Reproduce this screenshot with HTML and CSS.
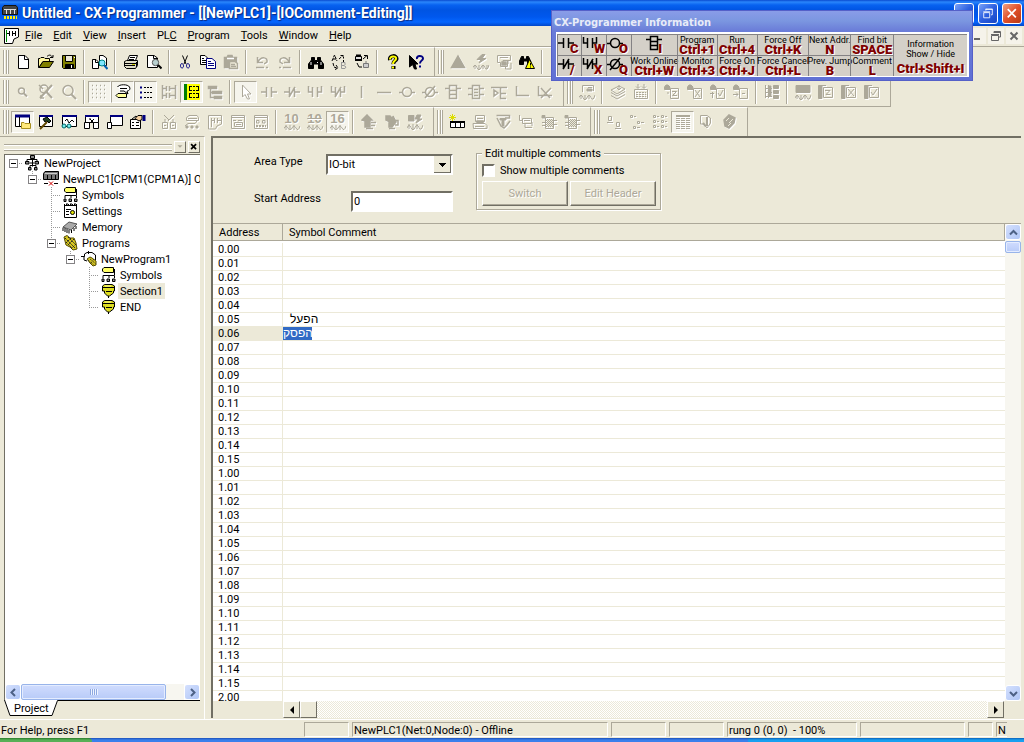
FILE: index.html
```html
<!DOCTYPE html>
<html lang="en">
<head>
<meta charset="utf-8">
<title>Untitled - CX-Programmer</title>
<link rel="stylesheet" href="styles.css">
</head>
<body>
<svg class="defs" aria-hidden="true">
<symbol id="new" viewBox="0 0 16 16"><path fill="#fff" d="M3.500 1.500H10L13.500 5V14.500H3.500Z"/><path d="M9.500 1.500V5.500H13.500"/></symbol>
<symbol id="open" viewBox="0 0 16 16"><path fill="#fff7a0" d="M.5 13.500V4.500H2L3 3.500H6L7 4.500H11.500V7.500H5L1 13.500Z"/><path fill="#808000" d="M1 13.500L5 7.500H15.500L11.500 13.500Z"/><path d="M9 2.500C11 .5 13 .5 14.500 3.500M12 3.500H15V1"/></symbol>
<symbol id="save" viewBox="0 0 16 16"><path fill="#808000" d="M1.500 1.500H14.500V14.500H2.500L1.500 13.500Z"/><path fill="#ece9d8" d="M4.500 1.500H11.500V7.500H4.500Z"/><path fill="#000" d="M4.500 10.500H12.500V14.500H4.500Z"/><path stroke="#fff" d="M10.500 11V14M13 3.500H14"/></symbol>
<symbol id="compare" viewBox="0 0 16 16"><path fill="#fff" d="M.5 5.500H4L6.500 8V14.500H.5ZM7.500 1.500H11L14.500 4V11.500H7.500Z"/><path d="M3.500 5.500V8.500H6.500"/><circle cx="10" cy="9" r="3" fill="#7fe8ff" stroke="#088"/><path stroke="#0060b0" stroke-width="2" d="M12 11L15.500 15"/></symbol>
<symbol id="print" viewBox="0 0 16 16"><path fill="#fff" d="M4.500 6.500L6.500 1.500H14.500L12.500 6.500Z"/><path d="M7 3.500H12M6 5.500H11"/><path fill="#e0ddc8" d="M1.500 7.500L3.500 6.500H14.500V11.500L12.500 14.500H3.500L1.500 12.500Z"/><path d="M2 9.500H13M2 11.500H12M13.500 8V13"/><path stroke="#cc0" d="M9 10.500H12"/></symbol>
<symbol id="preview" viewBox="0 0 16 16"><path fill="#fff" d="M1.500 1.500H8L11.500 4V13.500H1.500Z"/><path d="M7.500 1.500V4.500H11"/><circle cx="9.500" cy="8.500" r="3.200" fill="#b8d0d0" stroke="#555"/><path stroke-width="2" d="M12 11L15.500 14.500"/></symbol>
<symbol id="cut" viewBox="0 0 16 16"><path d="M5.500 1.500L9 10M10.500 1.500L7 10" /><path stroke="#000080" d="M5 9.500C3 9.500 3 14 5 14S7 10 5 9.500M11 9.500C9 9.500 9 14 11 14S13 10 11 9.500"/></symbol>
<symbol id="copy" viewBox="0 0 16 16"><path fill="#fff" d="M.5 1.500H5L7.500 4V10.500H.5Z"/><path d="M2 4.500H4M2 6.500H6M2 8.500H6"/><path stroke="#000080" fill="#fff" d="M6.500 4.500H12L15.500 7.500V14.500H6.500Z"/><path stroke="#000080" d="M8 7.500H11M8 9.500H14M8 11.500H14"/></symbol>
<symbol id="paste" viewBox="0 0 16 16"><path fill="currentColor" d="M1.500 3.500H4L5 1.500H9L10 3.500H13.500V13.500H1.500Z"/><path stroke="#fff" d="M4 4.500H11"/><path fill="#ece9d8" d="M6.500 7.500H12L14.500 9.500V14.500H6.500Z"/><path d="M8 10.500H12M8 12.500H13"/></symbol>
<symbol id="undo" viewBox="0 0 16 16"><path d="M3.500 3V8.500H9M4 8C7 2 14 3 13 8L10 10M2 13.500H10M12 13.500H14"/></symbol>
<symbol id="redo" viewBox="0 0 16 16"><path d="M12.500 3V8.500H7M12 8C9 2 2 3 3 8L6 10M2 13.500H4M6 13.500H14"/></symbol>
<symbol id="find" viewBox="0 0 16 16"><path fill="currentColor" d="M3.500 3.500H6.500V6.500H9.500V3.500H12.500V6L15.500 10V14.500H10.500V10H5.500V14.500H.5V10L3.500 6Z"/><path stroke="#fff" d="M3 8V11M9.500 8V9M13 8V11"/></symbol>
<symbol id="replace" viewBox="0 0 16 16"><path d="M1 7L3.500 1L6 7M2 5H5M2 9L3 13L6 14M5 11L7 14L4 15.500M8 5L12 1.500M9.500 1.500H12.500V4.500M12.500 6V8" stroke-dasharray="3 1"/><path stroke="#999" d="M10.500 8V14.500H14L15 13L13 11.500H11M14 11L14 8.500H11"/></symbol>
<symbol id="replall" viewBox="0 0 16 16"><path fill="#ddd" d="M1.500 2.500H7.500V5.500H1.500Z"/><path stroke-width="2" d="M1 6H8M2 1.500H7"/><path d="M3 9L5 13L8 13M9 5L13 1.500M10 1.500H13.500V5"/><path stroke="#777" fill="#ccc" d="M9.500 9.500H14.500V13.500H9.500ZM12 7V9"/></symbol>
<symbol id="help" viewBox="0 0 16 16"><path stroke-width="4" d="M5 6C4 1 12 1 11.500 5C11 7 8 7 8.500 10M8.500 12V15"/><path stroke="#ff0" stroke-width="2" d="M5 5.500C4.500 1.500 12 1.500 11 5C10.500 7 8 7 8 10M8 12.500V14.500"/></symbol>
<symbol id="whats" viewBox="0 0 16 16"><path fill="#000" d="M1.500 1.500V13L4.500 10.500L6.500 15H8.500L7 10H10Z"/><path stroke="#000080" stroke-width="2" d="M9 5C8 1 15 1 15 4.500C15 7 12 6 12 9.500M12 11.500V13.500"/></symbol>
<symbol id="warn" viewBox="0 0 16 16"><path fill="currentColor" d="M8 2L14.500 13.500H1.500Z"/></symbol>
<symbol id="online" viewBox="0 0 16 16"><path fill="currentColor" stroke-width="1" d="M9 .5L4 5.500H8L6 9L13 4.500H9L12 .5Z"/><path stroke-width="1" d="M0 13.500Q2 9 4 13.500T8 13.500T12 13.500T16 11M2 11V15M6 11V15M10 11V15M14 11V15"/></symbol>
<symbol id="monitor" viewBox="0 0 16 16"><path stroke-width="1" d="M1.500 1.500H14.500V6.500H11.500V12.500H4.500V8.500H1.500ZM4 3.500H12M7 6.500H12V10H7ZM9.500 12V15H15V9"/><path fill="currentColor" d="M6 8H10V11H6Z"/></symbol>
<symbol id="findwarn" viewBox="0 0 16 16"><path fill="#000" d="M2.500 2.500H4.500V5H7.500V2.500H9.500L12 8V10.500H8.500V7H4.500V10.500H.5V7Z"/><path fill="#ff0" d="M10.500 5.500L15.500 14.500H6.500Z"/><path d="M11.500 9V11.500M11.500 12.500V13.500"/></symbol>
<symbol id="zsmall" viewBox="0 0 16 16"><circle cx="6.500" cy="7" r="3"/><path stroke-width="2" d="M9 9.500L12 12.500"/></symbol>
<symbol id="zfit" viewBox="0 0 16 16"><circle cx="6" cy="5" r="4"/><path stroke-width="2" d="M2 14L14 1M8.500 8L14 14"/><path d="M1 1L5 5M3 11V14H6"/></symbol>
<symbol id="zoom" viewBox="0 0 16 16"><circle cx="7" cy="6.500" r="5"/><path stroke-width="2" d="M10.500 10.500L15 15"/></symbol>
<symbol id="dots" viewBox="0 0 16 16"><path stroke-dasharray="1 3" d="M0 1.500H16M0 5.500H16M0 9.500H16M0 13.500H16"/></symbol>
<symbol id="comment" viewBox="0 0 16 16"><path fill="#fff" d="M2.500 3C4 0 13 0 14.500 3C16 6 13 7 12 7L13 10L9 7H5"/><path d="M5 4.500H12"/><path fill="#ff9" d="M3 9.500H11.500V13.500H3L1 11.500Z"/></symbol>
<symbol id="list" viewBox="0 0 16 16"><path stroke-width="2" stroke="#000080" stroke-dasharray="2 3" d="M3 2.500V15"/><path stroke-dasharray="2 1" d="M6 3.500H15M6 8.500H15M6 13.500H15"/></symbol>
<symbol id="ladder" viewBox="0 0 16 16"><path d="M1.500 1V15M14.500 1V15M2 4.500H5M5.500 2V7M8.500 2V7M9 4.500H14M2 11.500H5M5.500 9V14M8.500 9V14M9 11.500H14"/></symbol>
<symbol id="rungs" viewBox="0 0 16 16"><path fill="#ff0" stroke="#ff0" d="M3 .5H15.500V15.500H3Z"/><path stroke="#008000" stroke-width="3" d="M1.500 0V16"/><path stroke-dasharray="2 1" d="M6 2.500H14M6 6.500H14M6 9.500H14M6 13.500H14"/><path d="M5.500 2V7M14.500 2V7M5.500 9V14M14.500 9V14"/></symbol>
<symbol id="blocks" viewBox="0 0 16 16"><path fill="currentColor" d="M1.500 2.500H9.500V4.500H1.500ZM5.500 7.500H14.500V9.500H5.500ZM7.500 12.500H14.500V14.500H7.500Z"/><path d="M3.500 5V13.500H7M3.500 8.500H6"/></symbol>
<symbol id="pointer" viewBox="0 0 16 16"><path stroke-width="1" fill="#fff" d="M4.500 1V13L7 10.500L9.500 15H11.500L9.500 10H13Z"/></symbol>
<symbol id="no" viewBox="0 0 16 16"><path d="M0 8H5M5.500 3V13M10.500 3V13M11 8H16"/></symbol>
<symbol id="nc" viewBox="0 0 16 16"><path d="M0 8H5M5.500 3V13M10.500 3V13M11 8H16M5 13L11 3"/></symbol>
<symbol id="orno" viewBox="0 0 16 16"><path d="M1.500 2V8H5M5.500 3V13M10.500 3V13M11 8H14.500V2"/></symbol>
<symbol id="ornc" viewBox="0 0 16 16"><path d="M1.500 2V8H5M5.500 3V13M10.500 3V13M11 8H14.500V2M5 13L11 3"/></symbol>
<symbol id="vline" viewBox="0 0 16 16"><path d="M8.500 2V14"/></symbol>
<symbol id="hline" viewBox="0 0 16 16"><path d="M1 8.500H15"/></symbol>
<symbol id="coil" viewBox="0 0 16 16"><circle cx="8" cy="8" r="4.500"/><path d="M0 8.500H3M13 8.500H16"/></symbol>
<symbol id="ncoil" viewBox="0 0 16 16"><circle cx="8" cy="8" r="4.500"/><path d="M0 8.500H3M13 8.500H16M3 14L13 2"/></symbol>
<symbol id="func" viewBox="0 0 16 16"><path d="M4.500 1.500H11.500V14.500H4.500ZM0 4.500H4M12 4.500H16M4 6.500H12M4 10.500H12"/></symbol>
<symbol id="func2" viewBox="0 0 16 16"><path d="M4.500 1.500H11.500V14.500H4.500ZM0 4.500H4M12 4.500H16M0 10.500H4M12 10.500H16M6 5.500H10M6 8.500H10M6 11.500H10"/></symbol>
<symbol id="func3" viewBox="0 0 16 16"><path d="M0 3.500H16M9.500 3V14.500H15M10 9.500H15M3 6L7 9L3 12Z"/></symbol>
<symbol id="corner" viewBox="0 0 16 16"><path d="M2.500 2V11.500H15"/></symbol>
<symbol id="del" viewBox="0 0 16 16"><path d="M1.500 2V11.500H15M4 4L13 14M14 4L4 14"/></symbol>
<symbol id="wave" viewBox="0 0 16 16"><path stroke-width="1" d="M3.500 8V1.500H14.500V7M9 3.500H13M0 13.500Q2 9 4 13.500T8 13.500T12 13.500T16 11M2 11V15M6 11V15M10 11V15"/><path fill="currentColor" stroke-width="1" d="M8 5H13V7H8Z"/></symbol>
<symbol id="stack" viewBox="0 0 16 16"><path stroke-width="1" d="M1 6L9 2L15 5L7 10ZM1 8.500L7 12L15 7.500M1 11.500L7 15L15 10.500M9 1V6L7 4M9 6L11 4"/></symbol>
<symbol id="keypad" viewBox="0 0 16 16"><path stroke-width="1" d="M1.500 5.500H14.500V14.500H1.500Z"/><path stroke-width="1" stroke-dasharray="2 1" d="M3 8.500H13M3 10.500H13M3 12.500H13"/><path stroke-width="1" d="M5 0V4M3 2.500L5 4.500L7 2.500M11 0V4M9 2.500L11 4.500L13 2.500"/></symbol>
<symbol id="tz" viewBox="0 0 16 16"><path fill="currentColor" stroke-width="1" d="M.5 5.500V3L2 1H4L6 3V5.500Z"/><path stroke-width="1" d="M6.500 4.500H14.500V14.500H6.500ZM8 7.500H12.500L8.500 11.500H13M4 8V10"/></symbol>
<symbol id="tx" viewBox="0 0 16 16"><path fill="currentColor" stroke-width="1" d="M.5 5.500V3L2 1H4L6 3V5.500Z"/><path stroke-width="1" d="M6.500 4.500H14.500V14.500H6.500ZM8 6L13 13M13 6L8 13"/></symbol>
<symbol id="tv" viewBox="0 0 16 16"><path fill="currentColor" stroke-width="1" d="M.5 5.500V3L2 1H4L6 3V5.500Z"/><path stroke-width="1" d="M6.500 4.500H14.500V14.500H6.500ZM8 9L10 12L13 6M0 9.500H4M2.500 8V14"/></symbol>
<symbol id="ta" viewBox="0 0 16 16"><path fill="currentColor" stroke-width="1" d="M.5 5.500V3L2 1H4L6 3V5.500Z"/><path stroke-width="1" d="M6.500 4.500H14.500V14.500H6.500ZM0 10.500H5M3 8.500L5 10.500L3 12.500M9 9.500H12"/></symbol>
<symbol id="racks" viewBox="0 0 16 16"><path stroke-width="1" d="M1.500 1V14M4.500 1V14M1 4.500H8M1 8.500H8M1 12.500H8"/><path fill="currentColor" stroke-width="1" d="M9.500 1.500H14.500V4.500H9.500ZM9.500 6.500H14.500V9.500H9.500ZM9.500 11.500H14.500V14.500H9.500ZM5 2H7V12H5Z"/></symbol>
<symbol id="block" viewBox="0 0 16 16"><path fill="currentColor" stroke-width="1" d="M1 1.500H15V8.500H1Z"/><path stroke-width="1" d="M0 14Q2 9 4 13.500T8 13.500T12 13.500T16 11M2 11V15M6 11V15M10 11V15"/></symbol>
<symbol id="wz" viewBox="0 0 16 16"><path fill="currentColor" stroke-width="1" d="M.5 1.500H4V14.500H.5Z"/><path stroke-width="1" d="M4 1.500H8M5.500 3.500H14.500V13.500H5.500ZM7 6.500H12L8 10.500H12.500"/></symbol>
<symbol id="wx" viewBox="0 0 16 16"><path fill="currentColor" stroke-width="1" d="M.5 1.500H4V14.500H.5Z"/><path stroke-width="1" d="M4 1.500H8M5.500 3.500H14.500V13.500H5.500ZM7 5L13 12M13 5L7 12"/></symbol>
<symbol id="wv" viewBox="0 0 16 16"><path fill="currentColor" stroke-width="1" d="M.5 1.500H4V14.500H.5Z"/><path stroke-width="1" d="M4 1.500H8M5.500 3.500H14.500V13.500H5.500ZM7 8L9 11L13 5"/></symbol>
<symbol id="proj" viewBox="0 0 16 16"><path fill="#fff" d="M.5 1.500H14.500V12.500H.5Z"/><path stroke="#000080" stroke-width="3" d="M0 2H15"/><path d="M4.500 3V12"/><path fill="#ffe97a" stroke="#a89020" d="M6.500 8.500H9L10 9.500H15.500V14.500H6.500Z"/></symbol>
<symbol id="build" viewBox="0 0 16 16"><path fill="#fff" d="M1.500 1.500H14.500V12.500H1.500Z"/><path stroke="#000080" stroke-width="2" d="M1 2H15"/><path fill="#204020" d="M5 5L9 3L13 7L11 9L9 7L7 8Z"/><path stroke="#604800" stroke-width="2" d="M9 8L2 15"/></symbol>
<symbol id="watch" viewBox="0 0 16 16"><path fill="#fff" d="M1.500 1.500H15.500V12.500H1.500Z"/><path stroke="#000080" stroke-width="2" d="M1 2H16"/><path d="M4 7L6 5L8 9L11 6L13 8"/><circle cx="3" cy="12" r="2" fill="#7ee" stroke="#066"/><circle cx="8" cy="12" r="2" fill="#7ee" stroke="#066"/></symbol>
<symbol id="xref" viewBox="0 0 16 16"><path fill="#fff" d="M1.500 1.500H14.500V8.500H1.500Z"/><path stroke="#000080" stroke-width="2" d="M1 2H15"/><path d="M5 10L10 5M6 5L11 10M5 5H7"/><path fill="#fff" d="M.5 8.500H5.500V14.500H.5ZM9.500 8.500H14.500V14.500H9.500Z"/></symbol>
<symbol id="output" viewBox="0 0 16 16"><path fill="#fff" d="M3.500 1.500H15.500V11.500H3.500Z"/><path stroke="#000080" stroke-width="2" d="M3 2H16"/><path fill="#fff" d="M.5 8.500H4.500V14.500H.5Z"/></symbol>
<symbol id="prop" viewBox="0 0 16 16"><path fill="#fff" d="M.5 5.500H10.500V14.500H.5Z"/><path d="M2 8.500H4M6 8.500H9M2 11.500H4M6 11.500H9M2 5L6 2L10 6"/><path fill="#f4d0a0" d="M5 4.500L8 1.500H12V5.500L9 7Z"/><path stroke="#000080" stroke-width="3" d="M14 1V7"/></symbol>
<symbol id="x1" viewBox="0 0 16 16"><path stroke-width="1" d="M3 1L8 6M13 1L7 7M1.500 8.500H6.500V14.500H1.500ZM9.500 8.500H14.500V14.500H9.500ZM4 5V8M12 5V8M3 11.500H5M11 11.500H13"/></symbol>
<symbol id="x2" viewBox="0 0 16 16"><path stroke-width="1" d="M2.500 3.500L5 1.500H13L14.500 3.500V6.500H2.500ZM4 4.500H13M13 7L11 9.500H4L1 12"/><path fill="currentColor" stroke-width="1" d="M2 12H4V14H2ZM7 12H9V14H7ZM12 12H14V14H12Z"/></symbol>
<symbol id="x3" viewBox="0 0 16 16"><path stroke-width="1" d="M1.500 1.500H14.500V10L10 12L8.500 15H1.500ZM4.500 4V13M4.500 6.500H7M7.500 4V9M10.500 4V9M11 6.500H14"/></symbol>
<symbol id="x4" viewBox="0 0 16 16"><path stroke-width="1" d="M1.500 1.500H14.500V14.500H1.500ZM1 3.500H15M3 6.500H6M8 6.500H12M4.500 8.500H12.500V12.500H4.500ZM6 10.500H11"/></symbol>
<symbol id="x5" viewBox="0 0 16 16"><path stroke-width="1" d="M1.500 1.500H14.500V14.500H1.500ZM1 3.500H15M3.500 6.500H6V9H3.500ZM9.500 6.500H12V9H9.500Z"/><path stroke-width="2" stroke-dasharray="2 1" d="M3 12H13"/></symbol>
<symbol id="up" viewBox="0 0 16 16"><path fill="currentColor" d="M1 6L6 1L11 6H9V13H4V7Z"/><path d="M10 8.500H15M10 11.500H14M5 14.500H12"/></symbol>
<symbol id="down" viewBox="0 0 16 16"><path fill="currentColor" d="M2 2H6L9 5V2L12 8L8 13H5V9H8L2 6Z"/><path d="M11 6.500H14V11H11M5 14.500H11"/></symbol>
<symbol id="flash" viewBox="0 0 16 16"><path fill="currentColor" stroke-width="1" d="M1.500 1.500H7V7H1.500ZM10 1L8 5H11L9 9L15 5H12L14 1Z"/><path stroke-width="1" d="M0 14Q2 9 4 13.500T8 13.500T12 13.500T16 11M2 10V15M6 10V15M10 10V15"/></symbol>
<symbol id="newrung" viewBox="0 0 16 16"><path stroke="#000" fill="#fff" d="M1.500 7.500H15.500V13.500H1.500Z"/><path stroke-width="2" d="M1 8H16"/><path d="M6.500 7V14M11.500 7V14"/><path stroke="#dd0" d="M3.500 0V7M0 3.500H7M1 1L6 6M6 1L1 6"/></symbol>
<symbol id="s1" viewBox="0 0 16 16"><path stroke-width="1" d="M3.500 1.500H12.500V7.500H3.500ZM1 9.500H13L15 11.500V14.500H1.500ZM5 4.500H11M3 12.500H12"/><path fill="currentColor" d="M5 7H11V9H5Z"/></symbol>
<symbol id="s2" viewBox="0 0 16 16"><path d="M1.500 1.500H14.500V4L10 4M2 4L6 12L9 14L12 11L15 7"/><path fill="currentColor" stroke-width="1" d="M5 4.500H11V6H9V12H7V6H5Z"/></symbol>
<symbol id="s3" viewBox="0 0 16 16"><path stroke-width="1" d="M1.500 1V6.500H5M4.500 4.500H13.500V9.500H4.500ZM7 10V13.500H14M14 8V12M6 6.500H12"/></symbol>
<symbol id="s4" viewBox="0 0 16 16"><path fill="currentColor" stroke-width="1" d="M1 1.500H4V4H1Z"/><path stroke-width="1" d="M4.500 3.500H12.500V14.500H4.500ZM1 8.500H4M1 11.500H4M13 6.500H16M13 10.500H16"/><path stroke-width="1" stroke-dasharray="1 1" d="M6 5.500H12M5 6.500H12M6 7.500H12M5 8.500H12M6 9.500H12M5 10.500H12M6 11.500H12M5 12.500H12"/></symbol>
<symbol id="g1" viewBox="0 0 16 16"><path stroke-width="1" d="M2.500 2.500H5.500V6.500H2.500ZM10.500 8.500H13.500V12.500H10.500ZM1 8.500H7M9 14.500H15"/></symbol>
<symbol id="g2" viewBox="0 0 16 16"><path stroke-width="1" d="M1.500 1.500H3.500V3.500H1.500ZM5 2.500H7M8.500 7.500H10.500V9.500H8.500ZM12 8.500H15M4.500 12.500H6.500V14.500H4.500ZM8 13.500H11"/></symbol>
<symbol id="g3" viewBox="0 0 16 16"><path stroke-width="1" d="M1.500 1.500H3.500V3.500H1.500ZM5 2.500H7M9.500 1.500H11.500V3.500H9.500ZM13 2.500H15M1.500 6.500H3.500V8.500H1.500ZM5 7.500H7M9.500 6.500H11.500V8.500H9.500ZM13 7.500H15M1.500 11.500H3.500V13.500H1.500ZM5 12.500H7M9.500 11.500H11.500V13.500H9.500ZM13 12.500H15"/></symbol>
<symbol id="g4" viewBox="0 0 16 16"><path stroke-width="1" stroke-dasharray="4 1" d="M1 4.500H15M1 6.500H15M1 8.500H15M1 10.500H15M1 12.500H15M1 14.500H15"/><path stroke-width="2" d="M1 2H15"/></symbol>
<symbol id="g5" viewBox="0 0 16 16"><path stroke-width="1" d="M5 10H2.500V1.500H9L12.500 4V9L9 14L6 10"/><path stroke-width="2" d="M9 3V12M5 9L8 12.500"/></symbol>
<symbol id="g6" viewBox="0 0 16 16"><path fill="currentColor" d="M3 6L8 1L14 4L13 9L8 14L4 12Z"/><path stroke="#ece9d8" stroke-width="1" d="M5 7L8 4M8 9L12 5M7 12L10 9"/></symbol>
<symbol id="tproj" viewBox="0 0 16 16"><path fill="#888" d="M6.500 .5H10.500V3.500H6.500ZM1.500 6.500H5V9H1.500ZM11 6.500H14.500V9H11ZM4.500 12.500H7V15H4.500ZM10.500 12.500H13V15H10.500Z"/><path d="M8.500 4V11.500M3 6V4.500H13V6M6 12V10.500H12V12M6 8H10"/></symbol>
<symbol id="tplc" viewBox="0 0 16 16"><path fill="#777" d="M.5 2.500L2 .5H15.500V8.500H.5Z"/><path stroke="#ccc" d="M2 2.500H14"/><path d="M4.500 4V8M8.500 4V8M12.500 4V8M1 12.500H5M11 12.500H15"/><path stroke="#c00" d="M6 10.500L10 14.500M10 10.500L6 14.500"/></symbol>
<symbol id="tsym" viewBox="0 0 16 16"><path fill="#ff6" d="M2.500 2L4 .5H13.500V5.500H4L2.500 4Z"/><path d="M14.500 2V8.500H3V11M9 9V11M14.500 9V11"/><path fill="#999" d="M2 12H4V14.500H2ZM7 12H9.500V14.500H7ZM12.500 12H15V14.500H12.500Z"/></symbol>
<symbol id="tset" viewBox="0 0 16 16"><path fill="#fff" d="M2.500 2.500H14.500V14.500H2.500Z"/><path stroke-width="2" stroke-dasharray="1 1" d="M2 2H15"/><path d="M4 6.500H9M4 8.500H7M4 11.500H7M5 0V2M9 0V2M13 0V2"/><circle cx="10.500" cy="9.500" r="2" fill="#dd0"/></symbol>
<symbol id="tmem" viewBox="0 0 16 16"><path fill="#aaa" stroke="#555" d="M1 8L7 3L15 5L9 11Z"/><path d="M1 8.500V12M3 9V13M5 10V14M7 11V14.500M9.500 11V14M12 9V12M14 7V10"/></symbol>
<symbol id="tprg" viewBox="0 0 16 16"><path fill="#d8c820" stroke="#554c00" d="M2 2L5 .5L8 3L12 3L14 8L15 14L11 15L8 12L4 10Z"/><path stroke="#222" stroke-dasharray="2 1" d="M3 3L13 13M6 2L14 10M4 7L10 13M12 4L6 10M9 3L4 8M14 9L9 14"/></symbol>
<symbol id="tnp" viewBox="0 0 16 16"><path fill="#fff" d="M1 5.500H3.500V3L6 1.500H11L14.500 4V9M3 5V9L6 10M0 5.500H3M7.500 0V3"/><path fill="#d8c820" stroke="#554c00" d="M6 8L9 6L11 7L15 10V14L12 15L9 12Z"/><path stroke="#222" stroke-dasharray="1 1" d="M7 9L13 14M9 8L15 13M13 8L9 13"/></symbol>
<symbol id="tsec" viewBox="0 0 16 16"><path fill="#dd2" d="M2.500 3L4.500 1.500H12L14.500 3V8H13.500V10L9.500 13H7.500L4.500 10V8H2.500Z"/><path d="M2 4.500H14M6 8.500H12M8.500 13V15"/><path stroke="#ff9" d="M5 3H11"/></symbol>
</svg>

<header class="title">
<svg class="ico" viewBox="0 0 16 16"><path fill="#444" stroke="#111" d="M.5 2.500L2 .5H14L15.500 2.500V9.500H.5Z"/><path stroke="#ddd" d="M2 4.500H14M4.500 5V9M8.500 5V9M12.500 5V9"/><path stroke="#fe0" stroke-width="3" stroke-dasharray="2 1" d="M2 12.500H15"/></svg>
<h1>Untitled - CX-Programmer - [[NewPLC1]-[IOComment-Editing]]</h1>
<button class="win" aria-label="Minimize"><svg viewBox="0 0 21 21"><path stroke-width="3" d="M5 15H12"/></svg></button>
<button class="win" aria-label="Restore"><svg viewBox="0 0 21 21"><path d="M8 7V5.500H15.500V12H14M7.500 5.500H16M5.500 9.500H12.500V15.500H5.500ZM5 8.500H13"/></svg></button>
<button class="win close" aria-label="Close"><svg viewBox="0 0 21 21"><path stroke-width="2" d="M5.500 5.500L15 15M15 5.500L5.500 15"/></svg></button>
</header>

<nav class="menu">
<svg class="ico" viewBox="0 0 16 16"><path fill="#fff" d="M.5 .5H14.500V9L10 11L8.500 15.500H.5Z"/><path stroke="#080" d="M2.500 2V14"/><path d="M3 5.500H5M5.500 3V8M8.500 3V8M9 5.500H11.500M11.500 3V8"/></svg>
<button><u>F</u>ile</button><button><u>E</u>dit</button><button><u>V</u>iew</button><button><u>I</u>nsert</button><button>PL<u>C</u></button><button><u>P</u>rogram</button><button><u>T</u>ools</button><button><u>W</u>indow</button><button><u>H</u>elp</button>
<span class="mdi">
<button aria-label="Minimize document"><svg viewBox="0 0 14 14"><path stroke-width="2" d="M3 10H9"/></svg></button>
<button aria-label="Restore document"><svg viewBox="0 0 14 14"><path d="M5 4V2.500H11.500V8H10M5 3.500H12M2.500 6.500H9.500V11.500H2.500ZM2 5.500H10"/></svg></button>
<button aria-label="Close document"><svg viewBox="0 0 14 14"><path stroke-width="2" d="M3.500 3.500L10.500 10.500M10.500 3.500L3.500 10.500"/></svg></button>
</span>
</nav>

<div class="bands">
<div class="band">
<div class="bar" role="toolbar" aria-label="Standard">
<button aria-label="New"><svg><use href="#new"/></svg></button><button aria-label="Open"><svg><use href="#open"/></svg></button><button aria-label="Save"><svg><use href="#save"/></svg></button><i></i>
<button aria-label="Compare"><svg><use href="#compare"/></svg></button><i></i>
<button aria-label="Print"><svg><use href="#print"/></svg></button><button aria-label="Print preview"><svg><use href="#preview"/></svg></button><i></i>
<button aria-label="Cut"><svg><use href="#cut"/></svg></button><button aria-label="Copy"><svg><use href="#copy"/></svg></button><button disabled aria-label="Paste"><svg><use href="#paste"/></svg></button><i></i>
<button disabled aria-label="Undo"><svg><use href="#undo"/></svg></button><button disabled aria-label="Redo"><svg><use href="#redo"/></svg></button><i></i>
<button aria-label="Find"><svg><use href="#find"/></svg></button><button aria-label="Replace"><svg><use href="#replace"/></svg></button><button aria-label="Change all"><svg><use href="#replall"/></svg></button><i></i>
<button aria-label="Help"><svg><use href="#help"/></svg></button><button aria-label="Context help"><svg><use href="#whats"/></svg></button>
</div>
<div class="bar" role="toolbar" aria-label="PLC">
<button disabled aria-label="Work online"><svg><use href="#warn"/></svg></button><button disabled aria-label="Auto online"><svg><use href="#online"/></svg></button><button disabled aria-label="Monitor"><svg><use href="#monitor"/></svg></button><button aria-label="Find warning"><svg><use href="#findwarn"/></svg></button><i></i>
<button disabled aria-label="Transfer"><svg><use href="#stack"/></svg></button>
</div>
</div>
<div class="band">
<div class="bar" role="toolbar" aria-label="Diagram">
<button disabled aria-label="Zoom out"><svg><use href="#zsmall"/></svg></button><button disabled aria-label="Zoom to fit"><svg><use href="#zfit"/></svg></button><button disabled aria-label="Zoom in"><svg><use href="#zoom"/></svg></button><i></i>
<button disabled class="on" aria-label="Grid"><svg><use href="#dots"/></svg></button><button class="on" aria-label="Comments"><svg><use href="#comment"/></svg></button><button class="on" aria-label="Annotations"><svg><use href="#list"/></svg></button><button disabled aria-label="Rung monitor"><svg><use href="#ladder"/></svg></button><button class="on" aria-label="Program view"><svg><use href="#rungs"/></svg></button><button disabled aria-label="Block view"><svg><use href="#blocks"/></svg></button><i></i>
<button disabled class="on" aria-label="Select"><svg><use href="#pointer"/></svg></button><button disabled aria-label="Contact"><svg><use href="#no"/></svg></button><button disabled aria-label="Closed contact"><svg><use href="#nc"/></svg></button><button disabled aria-label="OR contact"><svg><use href="#orno"/></svg></button><button disabled aria-label="Closed OR contact"><svg><use href="#ornc"/></svg></button><button disabled aria-label="Vertical"><svg><use href="#vline"/></svg></button><button disabled aria-label="Horizontal"><svg><use href="#hline"/></svg></button><button disabled aria-label="Coil"><svg><use href="#coil"/></svg></button><button disabled aria-label="Closed coil"><svg><use href="#ncoil"/></svg></button><button disabled aria-label="Instruction"><svg><use href="#func"/></svg></button><button disabled aria-label="Function block"><svg><use href="#func2"/></svg></button><button disabled aria-label="Parameter"><svg><use href="#func3"/></svg></button><button disabled aria-label="Connect"><svg><use href="#corner"/></svg></button><button disabled aria-label="Delete line"><svg><use href="#del"/></svg></button>
</div>
<div class="bar" role="toolbar" aria-label="Online edit">
<button disabled aria-label="Watch"><svg><use href="#wave"/></svg></button><i></i>
<button disabled aria-label="Layers"><svg><use href="#stack"/></svg></button><button disabled aria-label="Keypad"><svg><use href="#keypad"/></svg></button><i></i>
<button disabled aria-label="Edit rungs"><svg><use href="#tz"/></svg></button><button disabled aria-label="Cancel edit"><svg><use href="#tx"/></svg></button><button disabled aria-label="Send changes"><svg><use href="#tv"/></svg></button><button disabled aria-label="Go to edit"><svg><use href="#ta"/></svg></button><i></i>
<button disabled aria-label="Racks"><svg><use href="#racks"/></svg></button><i></i>
<button disabled aria-label="Block monitor"><svg><use href="#block"/></svg></button><button disabled aria-label="Block edit"><svg><use href="#wz"/></svg></button><button disabled aria-label="Block cancel"><svg><use href="#wx"/></svg></button><button disabled aria-label="Block send"><svg><use href="#wv"/></svg></button>
</div>
</div>
<div class="band">
<div class="bar" role="toolbar" aria-label="Views">
<button class="on" aria-label="Workspace"><svg><use href="#proj"/></svg></button><button aria-label="Output"><svg><use href="#build"/></svg></button><button aria-label="Watch window"><svg><use href="#watch"/></svg></button><button aria-label="Cross reference"><svg><use href="#xref"/></svg></button><button aria-label="Address reference"><svg><use href="#output"/></svg></button><button aria-label="Properties"><svg><use href="#prop"/></svg></button><i></i>
<button disabled aria-label="References"><svg><use href="#x1"/></svg></button><button disabled aria-label="Symbols"><svg><use href="#x2"/></svg></button><button disabled aria-label="Diagram"><svg><use href="#x3"/></svg></button><button disabled aria-label="Mnemonics"><svg><use href="#x4"/></svg></button><button disabled aria-label="Comments table"><svg><use href="#x5"/></svg></button><i></i>
<button disabled class="num" aria-label="Decimal">10<svg viewBox="0 0 16 6"><path d="M0 4.500Q2 0 4 4T8 4T12 4T16 2M2 1V6M6 1V6M10 1V6"/></svg></button><button disabled class="num" aria-label="Signed decimal"><s>10</s><svg viewBox="0 0 16 6"><path d="M0 4.500Q2 0 4 4T8 4T12 4T16 2M2 1V6M6 1V6M10 1V6"/></svg></button><button disabled class="num on" aria-label="Hex">16<svg viewBox="0 0 16 6"><path d="M0 4.500Q2 0 4 4T8 4T12 4T16 2M2 1V6M6 1V6M10 1V6"/></svg></button><i></i>
<button disabled aria-label="Force on"><svg><use href="#up"/></svg></button><button disabled aria-label="Force off"><svg><use href="#down"/></svg></button><button disabled aria-label="Force cancel"><svg><use href="#flash"/></svg></button>
</div>
<div class="bar" role="toolbar" aria-label="Insert">
<button aria-label="New PLC"><svg><use href="#newrung"/></svg></button><button disabled aria-label="New program"><svg><use href="#s1"/></svg></button><button disabled aria-label="New section"><svg><use href="#s2"/></svg></button><button disabled aria-label="New symbol"><svg><use href="#s3"/></svg></button><button disabled aria-label="New block"><svg><use href="#s4"/></svg></button><button disabled aria-label="New block instance"><svg><use href="#s4"/></svg></button>
</div>
<div class="bar" role="toolbar" aria-label="Symbol table">
<button disabled aria-label="Large icons"><svg><use href="#g1"/></svg></button><button disabled aria-label="Small icons"><svg><use href="#g2"/></svg></button><button disabled aria-label="List"><svg><use href="#g3"/></svg></button><button disabled class="on" aria-label="Details"><svg><use href="#g4"/></svg></button><button disabled aria-label="Validate"><svg><use href="#g5"/></svg></button><button disabled aria-label="Compile"><svg><use href="#g6"/></svg></button>
</div>
</div>
</div>

<main>
<aside>
<div class="dock"><span class="rails"></span><button disabled aria-label="Expand panel"><svg viewBox="0 0 12 12"><path fill="#aca899" stroke="none" d="M3 4H9L6 7Z"/></svg></button><button aria-label="Close panel"><svg viewBox="0 0 12 12"><path stroke-width="2" d="M2.500 2.500L8.500 8.500M8.500 2.500L2.500 8.500"/></svg></button></div>
<div class="treebox">
<ul class="tree">
<li><div class="node root"><span class="join"><button aria-label="Collapse NewProject"></button></span><svg><use href="#tproj"/></svg><span>NewProject</span></div>
<ul><li><div class="node last"><span class="join"><button aria-label="Collapse NewPLC1"></button></span><svg><use href="#tplc"/></svg><span>NewPLC1[CPM1(CPM1A)] Offline</span></div>
<ul>
<li><div class="node"><span class="join"></span><svg><use href="#tsym"/></svg><span>Symbols</span></div></li>
<li><div class="node"><span class="join"></span><svg><use href="#tset"/></svg><span>Settings</span></div></li>
<li><div class="node"><span class="join"></span><svg><use href="#tmem"/></svg><span>Memory</span></div></li>
<li><div class="node last"><span class="join"><button aria-label="Collapse Programs"></button></span><svg><use href="#tprg"/></svg><span>Programs</span></div>
<ul><li><div class="node last"><span class="join"><button aria-label="Collapse NewProgram1"></button></span><svg><use href="#tnp"/></svg><span>NewProgram1</span></div>
<ul>
<li><div class="node"><span class="join"></span><svg><use href="#tsym"/></svg><span>Symbols</span></div></li>
<li><div class="node"><span class="join"></span><svg><use href="#tsec"/></svg><span class="sel">Section1</span></div></li>
<li><div class="node last"><span class="join"></span><svg><use href="#tsec"/></svg><span>END</span></div></li>
</ul></li></ul></li>
</ul></li></ul></li>
</ul>
<div class="hscroll"><button class="xp" aria-label="Scroll left"><svg viewBox="0 0 13 13"><path d="M8 3L4.500 6.500L8 10"/></svg></button><span class="thumb"></span><span class="rest"></span><button class="xp" aria-label="Scroll right"><svg viewBox="0 0 13 13"><path d="M5 3L8.500 6.500L5 10"/></svg></button></div>
</div>
<div class="tabs"><svg viewBox="0 0 8 17"><path fill="#fff" stroke="none" d="M0 0H8V16H6Z"/><path d="M.5 0L6 15.500H8"/></svg><button>Project</button><svg viewBox="0 0 8 17"><path fill="#fff" stroke="none" d="M0 0H8L2 16H0Z"/><path d="M0 15.500H2L7.500 .5H8"/></svg><span></span></div>
</aside>

<section class="editor">
<form class="form">
<div class="fields">
<label for="area">Area Type</label><select id="area"><option>IO-bit</option></select>
<label for="start">Start Address</label><input id="start" type="text" value="0">
</div>
<fieldset><legend>Edit multiple comments</legend>
<label class="check"><input type="checkbox">Show multiple comments</label>
<div class="pair"><button type="button" disabled>Switch</button><button type="button" disabled>Edit Header</button></div>
</fieldset>
</form>
<div class="view">
<div class="sheet">
<table>
<thead><tr><th>Address</th><th>Symbol Comment</th></tr></thead>
<tbody>
<tr><td>0.00</td><td></td></tr><tr><td>0.01</td><td></td></tr><tr><td>0.02</td><td></td></tr><tr><td>0.03</td><td></td></tr><tr><td>0.04</td><td></td></tr>
<tr><td>0.05</td><td lang="he">הפעל</td></tr>
<tr class="edit"><td>0.06</td><td><input type="text" lang="he" aria-label="Comment for 0.06" value="הפסק"></td></tr>
<tr><td>0.07</td><td></td></tr><tr><td>0.08</td><td></td></tr><tr><td>0.09</td><td></td></tr><tr><td>0.10</td><td></td></tr><tr><td>0.11</td><td></td></tr><tr><td>0.12</td><td></td></tr><tr><td>0.13</td><td></td></tr><tr><td>0.14</td><td></td></tr><tr><td>0.15</td><td></td></tr>
<tr><td>1.00</td><td></td></tr><tr><td>1.01</td><td></td></tr><tr><td>1.02</td><td></td></tr><tr><td>1.03</td><td></td></tr><tr><td>1.04</td><td></td></tr><tr><td>1.05</td><td></td></tr><tr><td>1.06</td><td></td></tr><tr><td>1.07</td><td></td></tr><tr><td>1.08</td><td></td></tr><tr><td>1.09</td><td></td></tr><tr><td>1.10</td><td></td></tr><tr><td>1.11</td><td></td></tr><tr><td>1.12</td><td></td></tr><tr><td>1.13</td><td></td></tr><tr><td>1.14</td><td></td></tr><tr><td>1.15</td><td></td></tr>
<tr><td>2.00</td><td></td></tr>
</tbody>
</table>
</div>
<div class="vscroll"><button class="xp" aria-label="Scroll up"><svg viewBox="0 0 13 13"><path d="M3 8.500L6.500 5L10 8.500"/></svg></button><span class="vthumb"></span><span class="rest"></span><button class="xp" aria-label="Scroll down"><svg viewBox="0 0 13 13"><path d="M3 5L6.500 8.500L10 5"/></svg></button></div>
</div>
<div class="bottom"><button aria-label="Scroll table left"><svg viewBox="0 0 12 12"><path fill="#000" stroke="none" d="M8 2V10L4 6Z"/></svg></button><span class="knob"></span><span class="track"></span><button aria-label="Scroll table right"><svg viewBox="0 0 12 12"><path fill="#000" stroke="none" d="M4 2V10L8 6Z"/></svg></button></div>
</section>
</main>

<footer class="status"><span class="msg">For Help, press F1</span><span class="w45"></span><span class="w256">NewPLC1(Net:0,Node:0) - Offline</span><span class="w55"></span><span class="w55"></span><span class="w130">rung 0 (0, 0) &nbsp;- 100%</span><span class="w105"></span><span class="w25"></span><span class="lock">N</span></footer>
<div class="taskbar"><span class="start"></span><span class="tasks"></span><span class="tray"></span></div>

<section class="info" aria-label="CX-Programmer Information">
<h2>CX-Programmer Information</h2>
<div class="keys">
<div class="sym"><svg><use href="#no"/></svg><b>C</b></div><div class="sym"><svg><use href="#orno"/></svg><b>W</b></div><div class="sym"><svg><use href="#coil"/></svg><b>O</b></div><div class="sym mid"><svg><use href="#func"/></svg><b>I</b></div>
<div>Program<b>Ctrl+1</b></div><div>Run<b>Ctrl+4</b></div><div>Force Off<b>Ctrl+K</b></div><div>Next Addr.<b>N</b></div><div>Find bit<b>SPACE</b></div>
<div class="tall">Information<br>Show / Hide<b>Ctrl+Shift+I</b></div>
<div class="sym"><svg><use href="#nc"/></svg><b>/</b></div><div class="sym"><svg><use href="#ornc"/></svg><b>X</b></div><div class="sym"><svg><use href="#ncoil"/></svg><b>Q</b></div><div>Work Online<b>Ctrl+W</b></div>
<div>Monitor<b>Ctrl+3</b></div><div>Force On<b>Ctrl+J</b></div><div>Force Cancel<b>Ctrl+L</b></div><div>Prev. Jump<b>B</b></div><div>Comment<b>L</b></div>
</div>
</section>
</body>
</html>
```

FILE: styles.css
```css
*, *::before { box-sizing: border-box; }
body { margin: 0; height: 100vh; display: flex; flex-direction: column; overflow: hidden; background: #ece9d8; color: #000; font: 11px/14px Roboto, "Liberation Sans", Arial, sans-serif; }
button, input, select { font: inherit; color: inherit; margin: 0; padding: 0; border: 0; background: none; border-radius: 0; }
svg { fill: none; stroke: currentColor; display: block; flex: none; }
.defs { position: absolute; width: 0; height: 0; }
ul { list-style: none; margin: 0; padding: 0; }
.ico { width: 16px; height: 16px; }

.title { display: flex; align-items: center; gap: 4px; height: 26px; flex: none; padding: 0 2px; background: linear-gradient(#0a4bd0, #2a86fb 2px, #0862f0 5px, #0054e3 10px, #0058ee 17px, #0566ff 22px, #0347c8); }
.title h1 { flex: 1; margin: 0; color: #fff; font: bold 14px/20px Roboto, "Open Sans", sans-serif; text-shadow: 1px 1px 1px #0a2a80; white-space: nowrap; }
.win { width: 20px; height: 21px; border: 1px solid #fff; border-radius: 3px; color: #fff; background: linear-gradient(135deg, #7aa2f8, #2c5fe0 50%, #1846c4); }
.win svg { width: 18px; height: 19px; }
.close { background: linear-gradient(135deg, #f0a080, #e0502a 50%, #b83a14); }

.menu { display: flex; align-items: center; height: 20px; flex: none; padding: 0 2px 0 4px; }
.menu > button { padding: 0 6px 0 5px; height: 18px; }
.mdi { margin-left: auto; display: flex; gap: 2px; }
.mdi button { width: 16px; height: 16px; padding: 1px; color: #666; background: #f5f3ea; }
.mdi svg { width: 14px; height: 14px; }

.bands { flex: none; border-top: 1px solid #aca899; }
.band { display: flex; height: 30px; }
.band:last-child { height: 29px; }
.bar { display: flex; align-items: center; padding-right: 7px; border-right: 1px solid #aca899; border-bottom: 1px solid #aca899; border-top: 1px solid #fff; }
.band:last-child .bar { border-bottom: 0; }
.bar::before { content: ""; width: 6px; height: 24px; margin: 0 2px 0 3px; border: solid #aca899; border-width: 0 1px; background: linear-gradient(90deg, #fff 1px, #ece9d8 1px 2px, #aca899 2px 3px, #fff 3px); }
.bar button { display: flex; align-items: center; justify-content: center; width: 23px; height: 22px; }
.bar svg { width: 16px; height: 16px; }
.bar i { width: 2px; height: 24px; margin: 0 3px; background: linear-gradient(90deg, #aca899 1px, #fff 1px); }
.bar button:disabled svg { color: #aca899; stroke-width: 1.5; filter: drop-shadow(1px 1px 0 #fff); }
.bar .on { border: 1px solid; border-color: #aca899 #fff #fff #aca899; background: #f5f4ec; }
.bar .num { flex-direction: column; color: #aca899; font: bold 13px/10px "Liberation Sans", sans-serif; text-shadow: 1px 1px 0 #fff; }
.bar .num:disabled svg { height: 6px; stroke-width: 1; }

main { flex: 1; min-height: 0; display: flex; }
aside { width: 205px; flex: none; display: flex; flex-direction: column; padding: 3px 4px 2px 4px; border-top: 1px solid #aca899; border-right: 1px solid #fff; }
.dock { display: flex; align-items: center; gap: 2px; height: 14px; flex: none; }
.rails { flex: 1; height: 7px; border: solid #aca899; border-width: 1px 0; background: linear-gradient(#fff 1px, #ece9d8 1px 4px, #fff 4px); }
.dock button { width: 12px; height: 12px; border: 1px solid; border-color: #fff #716f64 #716f64 #fff; }
.dock svg { width: 10px; height: 10px; }
.treebox { flex: 1; min-height: 0; display: flex; flex-direction: column; background: #fff; border: 1px solid #716f64; border-width: 1px 0 0 1px; overflow: hidden; }
.tree { flex: 1; min-height: 0; overflow: hidden; padding-left: 4px; }
.tree ul { padding-left: 19px; }
.node { display: flex; align-items: center; height: 16px; white-space: nowrap; }
.node > svg { width: 16px; height: 16px; margin-right: 2px; }
.node > span:last-child { padding: 2px 2px 0; line-height: 14px; }
.node .sel { background: #ece9d8; }
.join { display: flex; align-items: center; width: 15px; height: 16px; flex: none; background: repeating-linear-gradient(#999 0 1px, transparent 1px 2px) 4px 0 / 1px 16px no-repeat, repeating-linear-gradient(90deg, #999 0 1px, transparent 1px 2px) 4px 8px / 10px 1px no-repeat; }
.last .join { background-size: 1px 9px, 10px 1px; }
.root .join { background-size: 0 0, 10px 1px; }
.join button { width: 9px; height: 9px; border: 1px solid #848284; background: linear-gradient(#000, #000) center / 5px 1px no-repeat #fff; }
.hscroll { display: flex; height: 16px; flex: none; }
.xp { display: flex; align-items: center; justify-content: center; width: 16px; height: 16px; flex: none; border: 1px solid #fff; border-radius: 3px; background: linear-gradient(135deg, #d4e0fe, #b0c6f6); color: #4d6185; }
.xp svg { width: 13px; height: 13px; stroke-width: 2; }
.thumb, .vthumb { border: 1px solid #98b4ea; border-radius: 2px; background: linear-gradient(#d0dcfe, #b8cbf8); box-shadow: inset 0 0 0 1px #e4ecff; }
.thumb { flex: 8; background: repeating-linear-gradient(90deg, #8ea8e0 0 1px, #eef4ff 1px 2px) center / 8px 6px no-repeat, linear-gradient(#d0dcfe, #b8cbf8); }
.hscroll .rest { flex: 1; background: #f7f6f0; }
.tabs { display: flex; height: 17px; flex: none; }
.tabs svg { width: 8px; height: 17px; }
.tabs button { height: 16px; padding: 2px 1px 0 2px; background: #fff; border-bottom: 1px solid #000; }
.tabs span { flex: 1; border-top: 1px solid #000; }

.editor { flex: 1; min-width: 0; display: flex; flex-direction: column; margin: 0 3px 1px 6px; border: 1px solid #716f64; border-width: 2px 0 0 2px; }
.form { display: flex; align-items: flex-start; gap: 23px; height: 86px; flex: none; padding: 7px 0 0 41px; border-bottom: 1px solid #aca899; }
.fields { display: grid; grid-template-columns: 72px 127px; grid-template-rows: 38px 36px; align-items: center; }
.fields label { padding-bottom: 4px; white-space: nowrap; }
.fields input, .fields select { border: 2px solid; border-color: #716f64 #fff #fff #716f64; background: #fff; height: 21px; padding: 1px 1px 0; min-width: 0; }
.fields input { width: 102px; justify-self: end; }
.fields select { appearance: none; background: linear-gradient(#000, #000) right 5px top 7px / 7px 1px no-repeat, linear-gradient(#000, #000) right 6px top 8px / 5px 1px no-repeat, linear-gradient(#000, #000) right 7px top 9px / 3px 1px no-repeat, linear-gradient(#000, #000) right 8px top 10px / 1px 1px no-repeat, linear-gradient(#716f64, #716f64) right / 1px 17px no-repeat, linear-gradient(#716f64, #716f64) right bottom / 17px 1px no-repeat, linear-gradient(#ece9d8, #ece9d8) right / 17px 17px no-repeat #fff; }
fieldset { margin: 1px 0 0; padding: 0 4px 3px 5px; border: 1px solid #aca899; box-shadow: inset 1px 1px 0 #fff, 1px 1px 0 #fff; min-width: 0; }
legend { padding: 1px 3px 0; background: #ece9d8; }
.check { display: flex; align-items: center; gap: 5px; height: 19px; }
.check input { appearance: none; width: 13px; height: 13px; border: 2px solid; border-color: #716f64 #fff #fff #716f64; background: #fff; }
.pair { display: flex; gap: 2px; margin-top: 1px; }
.pair button { width: 86px; height: 25px; border: 1px solid; border-color: #fff #716f64 #716f64 #fff; box-shadow: inset -1px -1px 0 #aca899; color: #aca899; text-shadow: 1px 1px 0 #fff; }
.view { flex: 1; min-height: 0; display: flex; }
.sheet { flex: 1; min-width: 0; overflow: hidden; background: #fff; }
table { width: 100%; border-collapse: separate; border-spacing: 0; table-layout: fixed; }
th { height: 17px; padding: 2px 6px 0; text-align: left; font-weight: normal; background: #ece9d8; border-bottom: 1px solid #aca899; border-right: 1px solid #aca899; }
th:first-child { width: 70px; }
tbody::before { content: ""; display: block; height: 2px; }
td { height: 14px; padding: 0 5px; line-height: 13px; border-bottom: 1px solid #ece9d8; }
td:first-child { border-right: 1px solid #ece9d8; }
.edit td:first-child { background: #ece9d8; }
td + td { padding-left: 7px; }
.edit td + td { padding: 0; }
td[lang], td input { font: 12px/13px "Liberation Sans", Arial, sans-serif; }
td input { display: block; width: 29px; height: 13px; background: #316ac5; color: #fff; }
.vscroll { display: flex; flex-direction: column; width: 16px; flex: none; background: #f7f6f0; }
.vthumb { height: 12px; margin-top: 1px; }
.vscroll .rest { flex: 1; }
.bottom { display: flex; height: 17px; flex: none; padding: 0 17px 0 70px; }
.bottom button, .knob { width: 17px; border: 1px solid; border-color: #fff #716f64 #716f64 #fff; background: #ece9d8; }
.bottom button { display: flex; align-items: center; justify-content: center; }
.bottom svg { width: 12px; height: 12px; }
.track { flex: 1; background: repeating-conic-gradient(#fff 0 25%, #ece9d8 0 50%) 0 0 / 2px 2px; }

.status { display: flex; gap: 3px; height: 19px; flex: none; padding: 2px 17px 1px 1px; border-top: 1px solid #fff; line-height: 15px; white-space: nowrap; }
.status span { padding-left: 1px; border: 1px solid; border-color: #aca899 #fff #fff #aca899; }
.status .msg { flex: 1; border: 0; padding: 0; line-height: 17px; }
.w45 { width: 45px; }
.w256 { width: 256px; }
.w55 { width: 55px; }
.w130 { width: 130px; }
.w105 { width: 105px; }
.w25 { width: 25px; }
.status .lock { width: 11px; border-right: 0; }
.taskbar { display: flex; height: 4px; flex: none; background: linear-gradient(#1c50b8, #3a80ec 2px); }
.start { width: 9%; background: linear-gradient(#2a7a2a, #57b057 2px); border-radius: 0 4px 0 0; }
.tasks { flex: 1; }
.tray { width: 27%; background: linear-gradient(#0c60b8, #18a0f0 2px); }

.info { position: absolute; top: 10px; right: 51px; width: 422px; padding: 1px 3px 3px 4px; border: 1px solid #5560c8; background: linear-gradient(#8a9ce8, #7b96e0 10px, #6a7cd8 20px, #6070d4); }
.info h2 { margin: 0 0 0 -2px; height: 20px; color: #e8ecf8; font: bold 11px/21px "DejaVu Sans Condensed", "DejaVu Sans", sans-serif; white-space: nowrap; }
.keys { display: grid; grid-template-columns: 24fr 25fr 25fr 46fr 40fr 40fr 52fr 42fr 43fr 74fr; grid-template-rows: 21px 21px; border: 2px solid #fff; border-width: 2px 2px 1px 1px; background: #d4d0c8; font-size: 9px; line-height: 10px; }
.keys > div { display: flex; flex-direction: column; align-items: center; min-width: 0; white-space: nowrap; border: solid #848284; border-width: 1px 0 0 1px; }
.keys b { color: #800000; font-weight: 900; font-size: 13px; line-height: 10px; text-shadow: 1px 1px 0 #fff; }
.keys .tall { grid-row: span 2; text-align: center; padding-top: 4px; }
.keys .tall b { margin-top: 5px; }
.keys .sym { flex-direction: row; align-items: flex-start; }
.sym svg { width: 16px; height: 16px; stroke-width: 1.5; }
.sym b { align-self: flex-end; margin-left: -4px; line-height: 12px; }
.keys .mid { justify-content: center; }
```
